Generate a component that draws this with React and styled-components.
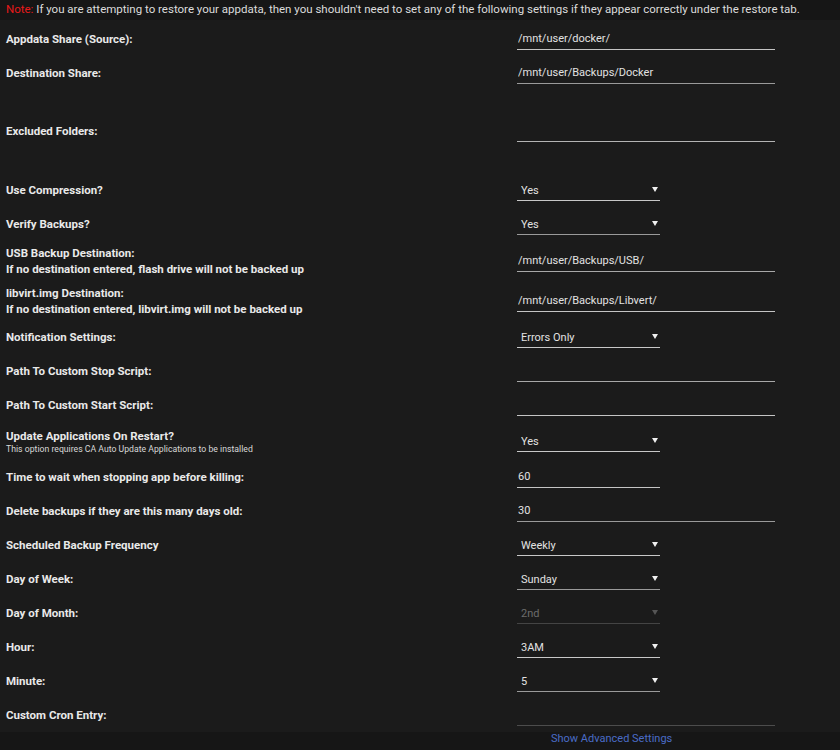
import React from 'react';
import styled, { createGlobalStyle } from 'styled-components';

const GlobalStyle = createGlobalStyle`
  html, body {
    margin: 0;
    padding: 0;
    background: #1b1b1b;
  }
  body {
    font-family: Roboto, "Open Sans", sans-serif;
    color: #e4e4e4;
  }
`;

const Page = styled.div`
  width: 840px;
  height: 750px;
  background: #1b1b1b;
  display: flex;
  flex-direction: column;
  overflow: hidden;
`;

const NoteBar = styled.div`
  height: 20px;
  line-height: 18px;
  padding-left: 6px;
  font-size: 11.5px;
  color: #dcdcdc;
  background: #161616;
  white-space: nowrap;
`;

const NoteRed = styled.span`
  color: #e8191a;
`;

const Form = styled.div`
  display: flex;
  flex-direction: column;
  padding-top: 2px;
`;

const Row = styled.div`
  display: grid;
  grid-template-columns: 511px 1fr;
  align-items: center;
  height: ${p => p.$h || 34}px;
  padding-left: 6px;
`;

const Label = styled.div`
  font-size: 11.5px;
  font-weight: 700;
  line-height: 16px;
  color: #e9e9e9;
`;

const LabelMain = styled.div`
  line-height: 14px;
`;

const Sub = styled.div`
  font-size: 8.7px;
  font-weight: 400;
  line-height: 10px;
  margin-top: 1px;
  color: #d8d8d8;
`;

const TextInput = styled.input`
  width: ${p => (p.$short ? 143 : 258)}px;
  height: 22px;
  box-sizing: border-box;
  margin: 0;
  padding: 0 1px;
  background: transparent;
  border: 0;
  border-bottom: 1px solid ${p => p.$line || '#c4c4c4'};
  color: #e2e2e2;
  font-family: Roboto, "Open Sans", sans-serif;
  font-size: 11px;
  outline: none;
`;

const SelectWrap = styled.div`
  position: relative;
  width: 143px;
  height: 22px;
  box-sizing: border-box;
  border-bottom: 1px solid ${p => (p.$disabled ? '#444' : p.$line || '#c8c8c8')};

  &::after {
    content: '';
    position: absolute;
    right: 2px;
    top: 8px;
    border-left: 3px solid transparent;
    border-right: 3px solid transparent;
    border-top: 5px solid ${p => (p.$disabled ? '#555' : '#f0f0f0')};
  }
`;

const Select = styled.select`
  appearance: none;
  width: 100%;
  height: 100%;
  margin: 0;
  padding: 0 0 0 4px;
  background: transparent;
  border: 0;
  color: ${p => (p.disabled ? '#6c6c6c' : '#e2e2e2')};
  font-family: Roboto, "Open Sans", sans-serif;
  font-size: 11px;
  outline: none;
  opacity: 1;
`;

const Footer = styled.div`
  flex: 1;
  background: #161616;
  padding: 0 0 0 551px;
  line-height: 10px;
`;

const AdvancedLink = styled.a`
  font-size: 11px;
  color: #4a6cc6;
  text-decoration: none;
  cursor: pointer;
`;

const Drop = ({ value, disabled, line }) => (
  <SelectWrap $disabled={disabled} $line={line}>
    <Select value={value} disabled={disabled} onChange={() => {}}>
      <option>{value}</option>
    </Select>
  </SelectWrap>
);

const Text = ({ value = '', short, line }) => (
  <TextInput type="text" value={value} readOnly $short={short} $line={line} />
);

export default function App() {
  return (
    <Page>
      <GlobalStyle />
      <NoteBar>
        <NoteRed>Note:</NoteRed> If you are attempting to restore your appdata, then you shouldn't need to set any of the following settings if they appear correctly under the restore tab.
      </NoteBar>
      <Form>
        <Row>
          <Label>Appdata Share (Source):</Label>
          <Text value="/mnt/user/docker/" />
        </Row>
        <Row $h={33}>
          <Label>Destination Share:</Label>
          <Text value="/mnt/user/Backups/Docker" line="#9a9a9a" />
        </Row>
        <Row $h={84}>
          <Label>Excluded Folders:</Label>
          <Text line="#b4b4b4" />
        </Row>
        <Row>
          <Label>Use Compression?</Label>
          <Drop value="Yes" />
        </Row>
        <Row>
          <Label>Verify Backups?</Label>
          <Drop value="Yes" line="#9a9a9a" />
        </Row>
        <Row $h={40}>
          <Label>
            USB Backup Destination:
            <br />
            If no destination entered, flash drive will not be backed up
          </Label>
          <Text value="/mnt/user/Backups/USB/" line="#a8a8a8" />
        </Row>
        <Row $h={39}>
          <Label>
            libvirt.img Destination:
            <br />
            If no destination entered, libvirt.img will not be backed up
          </Label>
          <Text value="/mnt/user/Backups/Libvert/" />
        </Row>
        <Row>
          <Label>Notification Settings:</Label>
          <Drop value="Errors Only" />
        </Row>
        <Row>
          <Label>Path To Custom Stop Script:</Label>
          <Text line="#a8a8a8" />
        </Row>
        <Row>
          <Label>Path To Custom Start Script:</Label>
          <Text />
        </Row>
        <Row $h={38}>
          <Label>
            <LabelMain>Update Applications On Restart?</LabelMain>
            <Sub>This option requires CA Auto Update Applications to be installed</Sub>
          </Label>
          <Drop value="Yes" />
        </Row>
        <Row>
          <Label>Time to wait when stopping app before killing:</Label>
          <Text value="60" short />
        </Row>
        <Row>
          <Label>Delete backups if they are this many days old:</Label>
          <Text value="30" line="#9a9a9a" />
        </Row>
        <Row>
          <Label>Scheduled Backup Frequency</Label>
          <Drop value="Weekly" />
        </Row>
        <Row>
          <Label>Day of Week:</Label>
          <Drop value="Sunday" line="#9a9a9a" />
        </Row>
        <Row>
          <Label>Day of Month:</Label>
          <Drop value="2nd" disabled />
        </Row>
        <Row>
          <Label>Hour:</Label>
          <Drop value="3AM" />
        </Row>
        <Row>
          <Label>Minute:</Label>
          <Drop value="5" line="#9a9a9a" />
        </Row>
        <Row>
          <Label>Custom Cron Entry:</Label>
          <Text line="#4c4c4c" />
        </Row>
      </Form>
      <Footer>
        <AdvancedLink>Show Advanced Settings</AdvancedLink>
      </Footer>
    </Page>
  );
}
